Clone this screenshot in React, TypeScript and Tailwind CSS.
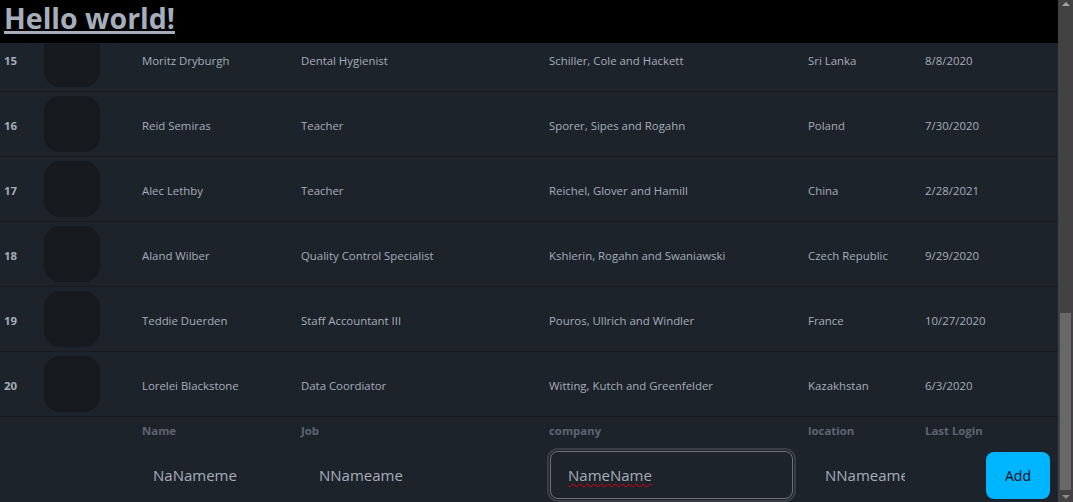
import React from "react";

type Person = { id: number; name: string; job: string; company: string; location: string; lastLogin: string };

const people: Person[] = [
  { id: 15, name: "Moritz Dryburgh", job: "Dental Hygienist", company: "Schiller, Cole and Hackett", location: "Sri Lanka", lastLogin: "8/8/2020" },
  { id: 16, name: "Reid Semiras", job: "Teacher", company: "Sporer, Sipes and Rogahn", location: "Poland", lastLogin: "7/30/2020" },
  { id: 17, name: "Alec Lethby", job: "Teacher", company: "Reichel, Glover and Hamill", location: "China", lastLogin: "2/28/2021" },
  { id: 18, name: "Aland Wilber", job: "Quality Control Specialist", company: "Kshlerin, Rogahn and Swaniawski", location: "Czech Republic", lastLogin: "9/29/2020" },
  { id: 19, name: "Teddie Duerden", job: "Staff Accountant III", company: "Pouros, Ullrich and Windler", location: "France", lastLogin: "10/27/2020" },
  { id: 20, name: "Lorelei Blackstone", job: "Data Coordiator", company: "Witting, Kutch and Greenfelder", location: "Kazakhstan", lastLogin: "6/3/2020" },
];

const cols = "grid grid-cols-[44px_98px_159px_248px_259px_117px_1fr] items-center";

function Row({ p, first }: { p: Person; first?: boolean }) {
  return (
    <div className={`${first ? "h-[49px]" : "h-[65px]"} overflow-hidden border-b border-[#181c21]`}>
      <div className={`${cols} h-[64px] ${first ? "-mt-[16px]" : ""} pt-[3px] text-[11.4px] text-[#a6adbb]`}>
        <span className="pl-[4px] font-bold">{p.id}</span>
        <div className="w-14 h-14 -mt-[3px] rounded-2xl bg-[#16191e]" />
        <span>{p.name}</span>
        <span>{p.job}</span>
        <span>{p.company}</span>
        <span>{p.location}</span>
        <span>{p.lastLogin}</span>
      </div>
    </div>
  );
}

function Scrollbar() {
  return (
    <div className="w-[15px] h-full bg-[#424242] flex flex-col items-center">
      <div className="h-[17px] flex items-start justify-center pt-[2px]">
        <div className="w-0 h-0 border-x-[4px] border-x-transparent border-b-[4px] border-b-[#a3a3a3]" />
      </div>
      <div className="flex-1 w-full" />
      <div className="w-[11px] h-[177px] bg-[#686868]" />
      <div className="h-[12px] flex items-end justify-center pb-[3px]">
        <div className="w-0 h-0 border-x-[4px] border-x-transparent border-t-[4px] border-t-[#8a8a8a]" />
      </div>
    </div>
  );
}

export default function App() {
  return (
    <div className="h-screen flex bg-[#1d232a] overflow-hidden font-['Open_Sans','Noto_Sans',sans-serif]">
      <div className="flex-1 flex flex-col">
        <h1 className="h-[43px] bg-black pl-[4px] text-[28.5px] leading-[36px] font-bold text-[#a6adbb] underline decoration-[3px] underline-offset-[2px]">
          Hello world!
        </h1>

        <div>
          {people.map((p, i) => (
            <Row key={p.id} p={p} first={i === 0} />
          ))}
        </div>

        <div className="flex-1">
          <div className={`${cols} h-[26px] pt-[1px] text-[11.4px] font-bold text-[#5d6573]`}>
            <span />
            <span />
            <span>Name</span>
            <span>Job</span>
            <span>company</span>
            <span>location</span>
            <span>Last Login</span>
          </div>
          <div className="flex items-center h-[58px] pt-[6px] text-[15px] text-[#a6adbb]">
            <input
              readOnly
              defaultValue="NaNameme"
              className="ml-[137px] w-[160px] h-12 px-4 bg-transparent outline-none"
            />
            <input
              readOnly
              defaultValue="NNameame"
              className="ml-[6px] w-[240px] h-12 px-4 bg-transparent outline-none"
            />
            <div className="ml-[7px] w-[243px] h-12 flex items-center px-[17px] rounded-lg border border-[#6e737b] outline-2 outline-offset-1 outline-[#383e47]">
              <span className="underline decoration-wavy decoration-red-600 decoration-1 underline-offset-2">NameName</span>
            </div>
            <input
              readOnly
              defaultValue="NNameame"
              className="ml-[16px] w-[112px] h-12 px-4 bg-transparent outline-none"
            />
            <button className="ml-[65px] w-16 h-[47px] rounded-lg bg-[#00b5ff] text-[14px] text-[#000d14]">
              Add
            </button>
          </div>
        </div>
      </div>
      <Scrollbar />
    </div>
  );
}
